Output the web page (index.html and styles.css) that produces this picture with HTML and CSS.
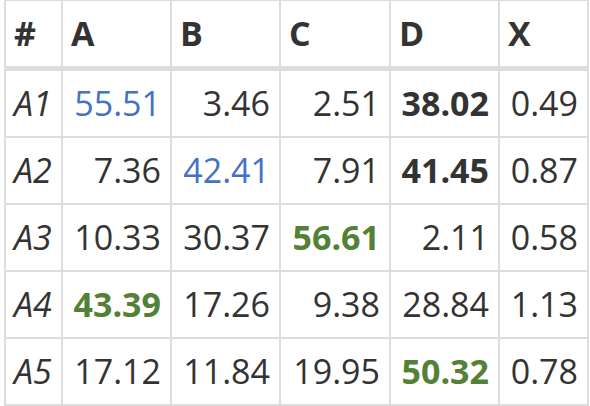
FILE: index.html
```html
<!DOCTYPE html>
<html>
<head>
<meta charset="utf-8">
<link rel="stylesheet" href="styles.css">
</head>
<body>
<div class="wrap">
<table class="grid">
  <colgroup>
    <col class="c-idx"><col class="c-num"><col class="c-num"><col class="c-wide"><col class="c-num"><col class="c-x">
  </colgroup>
  <thead>
    <tr><th>#</th><th>A</th><th>B</th><th>C</th><th>D</th><th>X</th></tr>
  </thead>
  <tbody>
    <tr><td class="idx">A1</td><td class="blue">55.51</td><td>3.46</td><td>2.51</td><td class="bold">38.02</td><td>0.49</td></tr>
    <tr><td class="idx">A2</td><td>7.36</td><td class="blue">42.41</td><td>7.91</td><td class="bold">41.45</td><td>0.87</td></tr>
    <tr><td class="idx">A3</td><td>10.33</td><td>30.37</td><td class="green">56.61</td><td>2.11</td><td>0.58</td></tr>
    <tr><td class="idx">A4</td><td class="green">43.39</td><td>17.26</td><td>9.38</td><td>28.84</td><td>1.13</td></tr>
    <tr><td class="idx">A5</td><td>17.12</td><td>11.84</td><td>19.95</td><td class="green">50.32</td><td>0.78</td></tr>
  </tbody>
</table>
</div>
</body>
</html>
```
FILE: styles.css
```css
html, body {
  margin: 0;
  padding: 0;
  background: #ffffff;
}
.wrap {
  padding-left: 4px;
}
.grid {
  margin-top: -1px;
  border-collapse: separate;
  border-spacing: 0;
  table-layout: fixed;
  width: 585px;
  border-left: 2px solid #dddddd;
  border-top: 2px solid #dddddd;
  font-family: "Open Sans", sans-serif;
  font-size: 34px;
  color: #333333;
}
.c-idx { width: 57px; }
.c-num { width: 109px; }
.c-wide { width: 110px; }
.c-x { width: 89px; }
.grid th, .grid td {
  border-right: 2px solid #dddddd;
  border-bottom: 2px solid #dddddd;
  padding: 7px 9px 7px 8px;
  line-height: 51px;
  white-space: nowrap;
  overflow: visible;
}
.grid th {
  text-align: left;
  font-weight: 700;
  border-bottom-width: 5px;
}
.grid td {
  text-align: right;
}
.grid td.idx {
  text-align: left;
  font-style: italic;
}
.blue { color: #4472c4; }
.green { color: #538135; font-weight: 700; }
.bold { font-weight: 700; }
```
